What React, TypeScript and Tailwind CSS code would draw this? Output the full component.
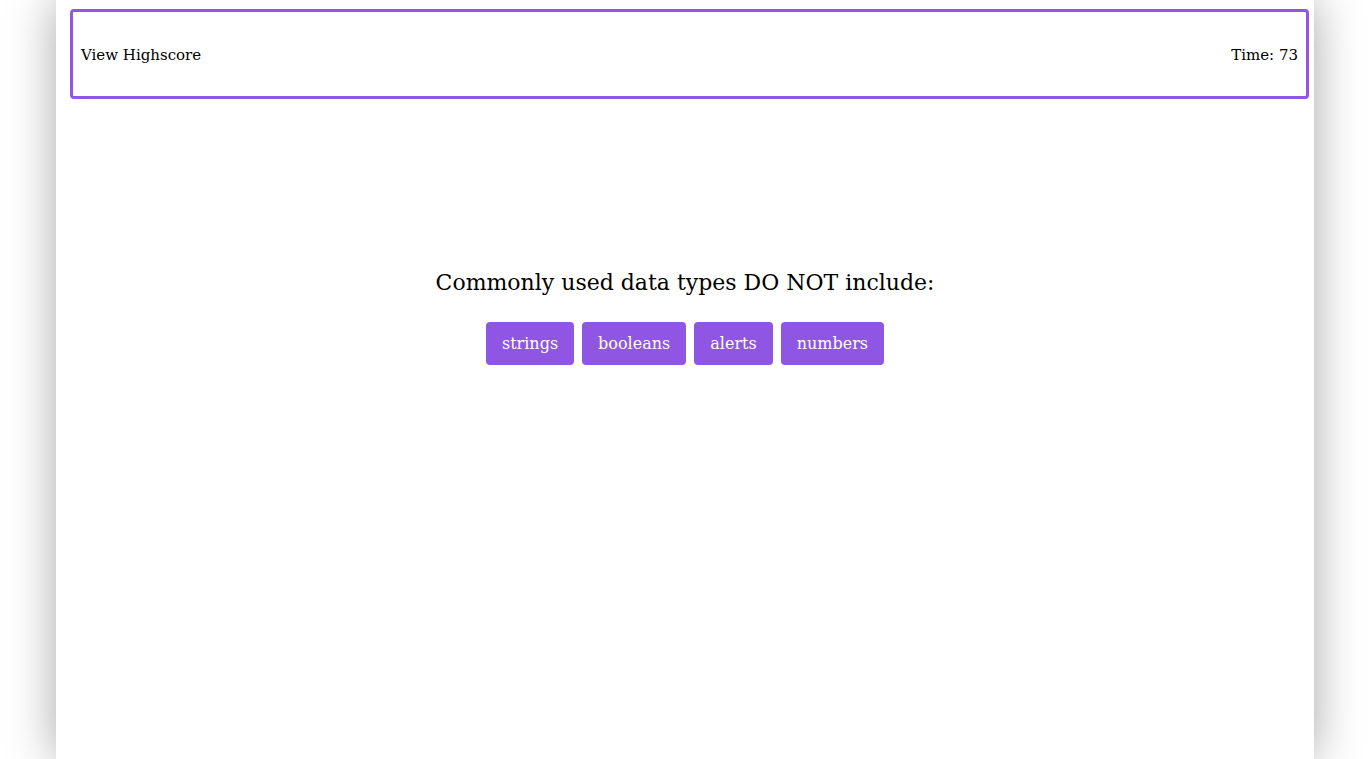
import React from "react";

const answers = ["strings", "booleans", "alerts", "numbers"];

export default function App() {
  return (
    <div className="min-h-screen bg-white" style={{ fontFamily: '"DejaVu Serif", serif' }}>
      <div className="mx-auto w-[1258px] min-h-screen bg-white pt-[9px] shadow-[0_0_45px_rgba(0,0,0,0.35)]">
        <header className="ml-[14px] mr-[5px] flex h-[90px] items-center justify-between rounded-[4px] border-[3px] border-[#8f57e3] px-[8px] pt-[2px] text-[15px] text-black">
          <span>View Highscore</span>
          <span>Time: 73</span>
        </header>
        <main className="flex flex-col items-center pt-[167px]">
          <h2 className="text-[22px] text-black">Commonly used data types DO NOT include:</h2>
          <div className="mt-[23px] flex gap-[8px]">
            {answers.map((a) => (
              <button
                key={a}
                className="h-[43px] rounded-[4px] bg-[#8f56e3] px-[16px] text-[16px] text-white"
              >
                {a}
              </button>
            ))}
          </div>
        </main>
      </div>
    </div>
  );
}
